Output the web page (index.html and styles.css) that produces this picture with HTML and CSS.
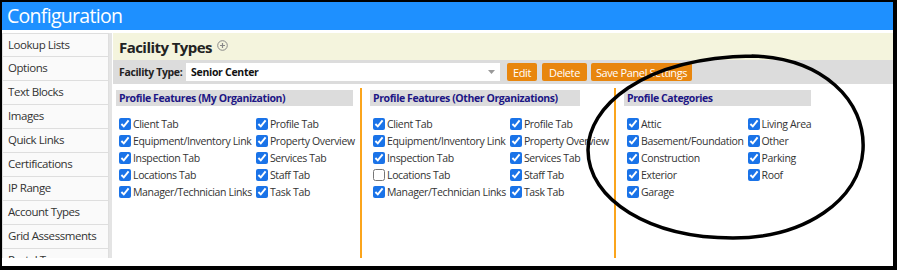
FILE: index.html
```html
<!DOCTYPE html>
<html>
<head>
<meta charset="utf-8">
<link rel="stylesheet" href="styles.css">
</head>
<body>
<div class="frame">
  <div class="app">
    <header class="topbar">Configuration</header>
    <div class="layout">
      <nav class="sidenav">
        <div class="nav-item">Lookup Lists</div>
        <div class="nav-item">Options</div>
        <div class="nav-item">Text Blocks</div>
        <div class="nav-item">Images</div>
        <div class="nav-item">Quick Links</div>
        <div class="nav-item">Certifications</div>
        <div class="nav-item">IP Range</div>
        <div class="nav-item">Account Types</div>
        <div class="nav-item">Grid Assessments</div>
        <div class="nav-item">Portal Types</div>
      </nav>
      <main class="main">
        <div class="titlebar">
          <h1 class="title">Facility Types</h1>
          <svg class="add-icon" width="11" height="11" viewBox="0 0 11 11"><circle cx="5.5" cy="5.5" r="4.8" fill="none" stroke="#888" stroke-width="1"/><path d="M5.5 3v5M3 5.5h5" stroke="#888" stroke-width="1.2"/></svg>
        </div>
        <div class="toolbar">
          <span class="tool-label">Facility Type:</span>
          <div class="select"><span>Senior Center</span><svg class="caret" width="7" height="4" viewBox="0 0 7 4"><path d="M0 0h7L3.5 4z" fill="#999"/></svg></div>
          <button class="btn btn-edit">Edit</button>
          <button class="btn btn-delete">Delete</button>
          <button class="btn btn-save">Save Panel Settings</button>
        </div>
        <div class="panels">
          <section class="panel panel-first">
            <h2 class="panel-head head-my">Profile Features (My Organization)</h2>
            <div class="checks">
              <label class="check"><input type="checkbox" checked>Client Tab</label>
              <label class="check"><input type="checkbox" checked>Profile Tab</label>
              <label class="check"><input type="checkbox" checked>Equipment/Inventory Link</label>
              <label class="check"><input type="checkbox" checked>Property Overview</label>
              <label class="check"><input type="checkbox" checked>Inspection Tab</label>
              <label class="check"><input type="checkbox" checked>Services Tab</label>
              <label class="check"><input type="checkbox" checked>Locations Tab</label>
              <label class="check"><input type="checkbox" checked>Staff Tab</label>
              <label class="check"><input type="checkbox" checked>Manager/Technician Links</label>
              <label class="check"><input type="checkbox" checked>Task Tab</label>
            </div>
          </section>
          <div class="divider"></div>
          <section class="panel panel-second">
            <h2 class="panel-head head-other">Profile Features (Other Organizations)</h2>
            <div class="checks">
              <label class="check"><input type="checkbox" checked>Client Tab</label>
              <label class="check"><input type="checkbox" checked>Profile Tab</label>
              <label class="check"><input type="checkbox" checked>Equipment/Inventory Link</label>
              <label class="check"><input type="checkbox" checked>Property Overview</label>
              <label class="check"><input type="checkbox" checked>Inspection Tab</label>
              <label class="check"><input type="checkbox" checked>Services Tab</label>
              <label class="check"><input type="checkbox">Locations Tab</label>
              <label class="check"><input type="checkbox" checked>Staff Tab</label>
              <label class="check"><input type="checkbox" checked>Manager/Technician Links</label>
              <label class="check"><input type="checkbox" checked>Task Tab</label>
            </div>
          </section>
          <div class="divider"></div>
          <section class="panel panel-third">
            <h2 class="panel-head head-cat">Profile Categories</h2>
            <div class="checks">
              <label class="check"><input type="checkbox" checked>Attic</label>
              <label class="check"><input type="checkbox" checked>Living Area</label>
              <label class="check"><input type="checkbox" checked>Basement/Foundation</label>
              <label class="check"><input type="checkbox" checked>Other</label>
              <label class="check"><input type="checkbox" checked>Construction</label>
              <label class="check"><input type="checkbox" checked>Parking</label>
              <label class="check"><input type="checkbox" checked>Exterior</label>
              <label class="check"><input type="checkbox" checked>Roof</label>
              <label class="check"><input type="checkbox" checked>Garage</label>
            </div>
          </section>
        </div>
      </main>
    </div>
  </div>
  <svg class="mark" width="897" height="270" viewBox="0 0 897 270">
    <path d="M752 56 C822 58 866 100 863 150 C860 200 805 238 733 238 C650 238 588 200 588 150 C588 108 640 58 752 56" fill="none" stroke="#000" stroke-width="3.5" stroke-linecap="round"/>
  </svg>
</div>
</body>
</html>
```

FILE: styles.css
```css
* { box-sizing: border-box; }
html, body { margin: 0; padding: 0; background: #fff; }
body { font-family: "Open Sans", "Noto Sans", sans-serif; }

.frame {
  position: relative;
  width: 897px;
  height: 270px;
  border-style: solid;
  border-color: #000;
  border-width: 2px 4px 4px 2px;
  background: #fff;
  overflow: hidden;
}
.app {
  height: 256px;
  overflow: hidden;
  display: flex;
  flex-direction: column;
}
.topbar {
  height: 28px;
  flex: none;
  background: #1e90ff;
  color: #fff;
  font-size: 19.5px;
  letter-spacing: -0.7px;
  line-height: 28px;
  padding-left: 5px;
}
.layout {
  display: flex;
  padding-top: 3px;
  flex: 1;
  min-height: 0;
}
.sidenav {
  width: 110px;
  flex: none;
  border-right: 3px solid #e4e4e4;
}
.nav-item {
  height: 24px;
  border: 1px solid #dedede;
  border-top: none;
  background: #fafafa;
  color: #333;
  font-size: 11.5px;
  letter-spacing: -0.45px;
  line-height: 22px;
  padding-left: 5px;
  white-space: nowrap;
}
.nav-item:first-child { border-top: 1px solid #dedede; }

.main {
  flex: 1;
  min-width: 0;
  margin-left: 1px;
  display: flex;
  flex-direction: column;
}
.titlebar {
  height: 27px;
  background: #f4f4dd;
  display: flex;
  align-items: center;
  padding-left: 6px;
}
.title {
  margin: 0;
  font-size: 15px;
  font-weight: 700;
  letter-spacing: -0.55px;
  color: #222;
}
.add-icon { margin-left: 5px; margin-top: -2px; }

.toolbar {
  height: 24px;
  background: #dcdcdc;
  display: flex;
  align-items: center;
  padding-left: 6px;
}
.tool-label {
  flex: none;
  width: 67px;
  font-size: 10.5px;
  font-weight: 700;
  letter-spacing: -0.35px;
  color: #222;
  white-space: nowrap;
}
.select {
  width: 314px;
  height: 18px;
  background: #fff;
  display: flex;
  align-items: center;
  justify-content: space-between;
  padding: 0 5px;
  font-size: 10.5px;
  font-weight: 700;
  letter-spacing: -0.3px;
  color: #111;
}
.btn {
  height: 18px;
  border: none;
  border-radius: 2px;
  background: #e8860e;
  color: #fff;
  font-family: "Open Sans", "Noto Sans", sans-serif;
  font-size: 11px;
  letter-spacing: -0.4px;
  white-space: nowrap;
  padding: 0;
  margin-left: 5px;
}
.btn-edit { width: 30px; margin-left: 7px; }
.btn-delete { width: 45px; }
.btn-save { width: 101px; margin-left: 4px; }

.panels {
  display: flex;
  flex: 1;
  min-height: 0;
}
.panel { padding-top: 6px; flex: none; }
.panel-first { width: 247px; padding-left: 3px; }
.panel-second { width: 252px; padding-left: 8px; }
.panel-third { width: 270px; padding-left: 8px; }
.divider {
  width: 2px;
  flex: none;
  background: #fba51c;
  margin-top: 4px;
}
.panel-head {
  margin: 0;
  height: 16px;
  background: #dcdcdc;
  color: #1d1685;
  font-size: 10.5px;
  font-weight: 700;
  letter-spacing: -0.4px;
  line-height: 16px;
  padding-left: 3px;
  white-space: nowrap;
}
.head-my { width: 237px; }
.head-other { width: 210px; }
.head-cat { width: 187px; }

.checks {
  display: grid;
  grid-template-columns: auto auto;
  justify-content: start;
  column-gap: 4px;
  margin-top: 9px;
  padding-left: 3px;
}
.check {
  display: flex;
  align-items: center;
  height: 17px;
  font-size: 10.5px;
  letter-spacing: -0.35px;
  color: #333;
  white-space: nowrap;
}
.check input {
  width: 12px;
  height: 12px;
  margin: 0 2px 0 0;
  accent-color: #1a73e8;
}

.mark {
  position: absolute;
  left: -2px;
  top: -2px;
  pointer-events: none;
}
```
